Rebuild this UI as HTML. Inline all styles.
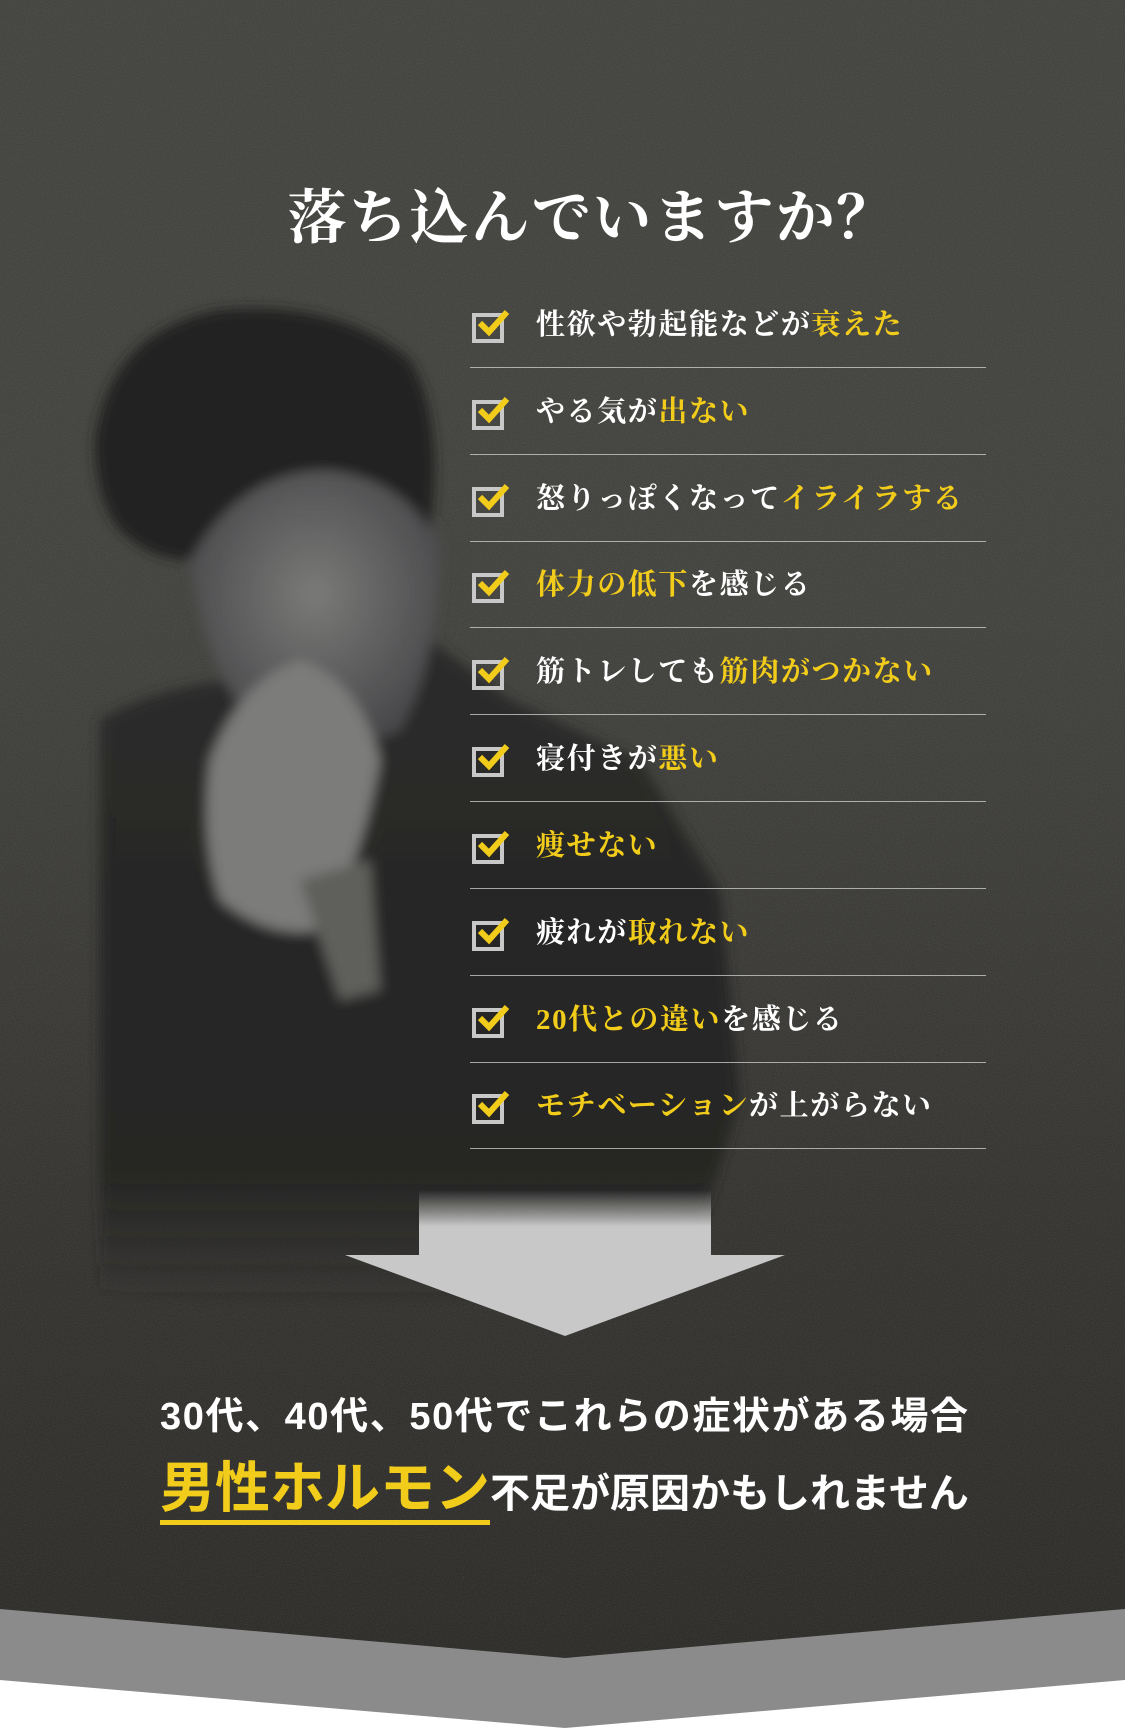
<!DOCTYPE html>
<html><head><meta charset="utf-8">
<style>
html,body{margin:0;padding:0;}
body{width:1125px;height:1728px;position:relative;overflow:hidden;background:#fff;}
.bg{position:absolute;left:0;top:0;width:1125px;height:1728px;}
.title{position:absolute;left:30px;width:1125px;top:170px;text-align:center;font-family:"Liberation Serif","Noto Serif CJK SC",serif;font-weight:bold;font-size:59px;color:#fff;letter-spacing:2px;}
.item{position:absolute;left:470px;width:516px;height:87px;border-bottom:1.5px solid rgba(210,210,210,.75);}
.item .cb{position:absolute;left:2px;top:29px;}
.item .t{position:absolute;left:66px;top:22px;font-family:"Liberation Serif","Noto Serif CJK SC",serif;font-weight:bold;font-size:29px;color:#fff;white-space:nowrap;letter-spacing:1.6px;}
.y{color:#f2cc1a;}
.l1{position:absolute;left:160px;top:1385px;font-family:"Liberation Sans","Noto Sans CJK JP",sans-serif;font-weight:bold;font-size:38px;color:#fff;letter-spacing:1.6px;white-space:nowrap;}
.l2{position:absolute;left:160px;top:1458px;font-family:"Liberation Sans","Noto Sans CJK JP",sans-serif;font-weight:bold;color:#fff;white-space:nowrap;}
.l2 .big{font-size:55px;color:#f2cc1a;border-bottom:5px solid #f2cc1a;display:inline-block;line-height:60px;padding-bottom:2px;}
.l2 .sm{font-size:40px;}
</style></head><body>
<svg class="bg" width="1125" height="1728" viewBox="0 0 1125 1728">
<defs>
<linearGradient id="g" x1="0" y1="0" x2="0" y2="1">
<stop offset="0" stop-color="#3c3c38"/><stop offset=".35" stop-color="#3b3b37"/><stop offset=".7" stop-color="#2d2c29"/><stop offset="1" stop-color="#23221f"/>
</linearGradient>
<radialGradient id="face" cx=".5" cy=".45" r=".55"><stop offset="0" stop-color="#7a7a78"/><stop offset="1" stop-color="#4a4a4c"/></radialGradient>
<linearGradient id="suitfade" x1="0" y1="0" x2="0" y2="1"><stop offset="0" stop-color="#2a2a2a"/><stop offset=".8" stop-color="#262624"/><stop offset="1" stop-color="#262624" stop-opacity="0"/></linearGradient>
<linearGradient id="arr" x1="0" y1="0" x2="0" y2="1"><stop offset="0" stop-color="#bbb" stop-opacity="0"/><stop offset=".25" stop-color="#c8c8c8"/><stop offset="1" stop-color="#c8c8c8"/></linearGradient>
<filter id="n"><feTurbulence type="fractalNoise" baseFrequency=".9" numOctaves="2" seed="3"/><feColorMatrix values="0 0 0 0 .5  0 0 0 0 .5  0 0 0 0 .5  0 0 0 .18 0"/></filter>
<filter id="b"><feGaussianBlur stdDeviation="6"/></filter>
</defs>
<rect width="1125" height="1728" fill="url(#g)"/>
<rect width="1125" height="1660" filter="url(#n)"/>
<g filter="url(#b)">
<path d="M100 720 Q150 690 230 680 L300 700 L430 640 L510 700 L640 760 L720 890 L740 1100 L700 1230 L560 1290 Q300 1320 100 1290 Z" fill="url(#suitfade)"/>
<path d="M190 560 Q210 700 270 730 Q330 760 400 730 Q440 660 440 540 Q420 470 300 470 Q200 480 190 560Z" fill="url(#face)"/>
<path d="M95 440 Q110 330 220 310 Q340 300 410 360 Q445 420 430 530 Q400 480 330 470 Q240 470 190 560 Q150 560 120 530 Q95 500 95 440Z" fill="#222"/>
<path d="M210 760 Q240 680 300 660 Q360 680 380 760 Q360 870 320 930 Q270 940 220 900 Q200 840 210 760Z" fill="#7c7c7a"/>
<path d="M300 880 L370 860 L380 990 L340 1000Z" fill="#5e5e5c"/>
</g>
<path d="M419 1190 H711 V1255 H785 L565 1336 L345 1255 H419 Z" fill="url(#arr)"/>
<path d="M0 1609 L565 1658 L1125 1609 V1728 H0Z" fill="#8b8b8b"/>
<path d="M0 1680 L565 1728 L1125 1680 V1728 H0Z" fill="#fff"/>
</svg>
<div class="title">落ち込んでいますか？</div>

<div class="item" style="top:280px"><svg class="cb" width="40" height="34" viewBox="0 0 40 34"><rect x="2" y="6" width="28" height="26" fill="none" stroke="#c8c8c8" stroke-width="4"/><path d="M8 14 L17 23 L35 3" fill="none" stroke="#f2cc1a" stroke-width="6"/></svg><div class="t">性欲や勃起能などが<span class="y">衰えた</span></div></div>
<div class="item" style="top:367px"><svg class="cb" width="40" height="34" viewBox="0 0 40 34"><rect x="2" y="6" width="28" height="26" fill="none" stroke="#c8c8c8" stroke-width="4"/><path d="M8 14 L17 23 L35 3" fill="none" stroke="#f2cc1a" stroke-width="6"/></svg><div class="t">やる気が<span class="y">出ない</span></div></div>
<div class="item" style="top:454px"><svg class="cb" width="40" height="34" viewBox="0 0 40 34"><rect x="2" y="6" width="28" height="26" fill="none" stroke="#c8c8c8" stroke-width="4"/><path d="M8 14 L17 23 L35 3" fill="none" stroke="#f2cc1a" stroke-width="6"/></svg><div class="t">怒りっぽくなって<span class="y">イライラする</span></div></div>
<div class="item" style="top:540px"><svg class="cb" width="40" height="34" viewBox="0 0 40 34"><rect x="2" y="6" width="28" height="26" fill="none" stroke="#c8c8c8" stroke-width="4"/><path d="M8 14 L17 23 L35 3" fill="none" stroke="#f2cc1a" stroke-width="6"/></svg><div class="t"><span class="y">体力の低下</span>を感じる</div></div>
<div class="item" style="top:627px"><svg class="cb" width="40" height="34" viewBox="0 0 40 34"><rect x="2" y="6" width="28" height="26" fill="none" stroke="#c8c8c8" stroke-width="4"/><path d="M8 14 L17 23 L35 3" fill="none" stroke="#f2cc1a" stroke-width="6"/></svg><div class="t">筋トレしても<span class="y">筋肉がつかない</span></div></div>
<div class="item" style="top:714px"><svg class="cb" width="40" height="34" viewBox="0 0 40 34"><rect x="2" y="6" width="28" height="26" fill="none" stroke="#c8c8c8" stroke-width="4"/><path d="M8 14 L17 23 L35 3" fill="none" stroke="#f2cc1a" stroke-width="6"/></svg><div class="t">寝付きが<span class="y">悪い</span></div></div>
<div class="item" style="top:801px"><svg class="cb" width="40" height="34" viewBox="0 0 40 34"><rect x="2" y="6" width="28" height="26" fill="none" stroke="#c8c8c8" stroke-width="4"/><path d="M8 14 L17 23 L35 3" fill="none" stroke="#f2cc1a" stroke-width="6"/></svg><div class="t"><span class="y">痩せない</span></div></div>
<div class="item" style="top:888px"><svg class="cb" width="40" height="34" viewBox="0 0 40 34"><rect x="2" y="6" width="28" height="26" fill="none" stroke="#c8c8c8" stroke-width="4"/><path d="M8 14 L17 23 L35 3" fill="none" stroke="#f2cc1a" stroke-width="6"/></svg><div class="t">疲れが<span class="y">取れない</span></div></div>
<div class="item" style="top:975px"><svg class="cb" width="40" height="34" viewBox="0 0 40 34"><rect x="2" y="6" width="28" height="26" fill="none" stroke="#c8c8c8" stroke-width="4"/><path d="M8 14 L17 23 L35 3" fill="none" stroke="#f2cc1a" stroke-width="6"/></svg><div class="t"><span class="y">20代との違い</span>を感じる</div></div>
<div class="item" style="top:1061px"><svg class="cb" width="40" height="34" viewBox="0 0 40 34"><rect x="2" y="6" width="28" height="26" fill="none" stroke="#c8c8c8" stroke-width="4"/><path d="M8 14 L17 23 L35 3" fill="none" stroke="#f2cc1a" stroke-width="6"/></svg><div class="t"><span class="y">モチベーション</span>が上がらない</div></div>

<div class="l1">30代、40代、50代でこれらの症状がある場合</div>
<div class="l2"><span class="big">男性ホルモン</span><span class="sm">不足が原因かもしれません</span></div>
</body></html>
